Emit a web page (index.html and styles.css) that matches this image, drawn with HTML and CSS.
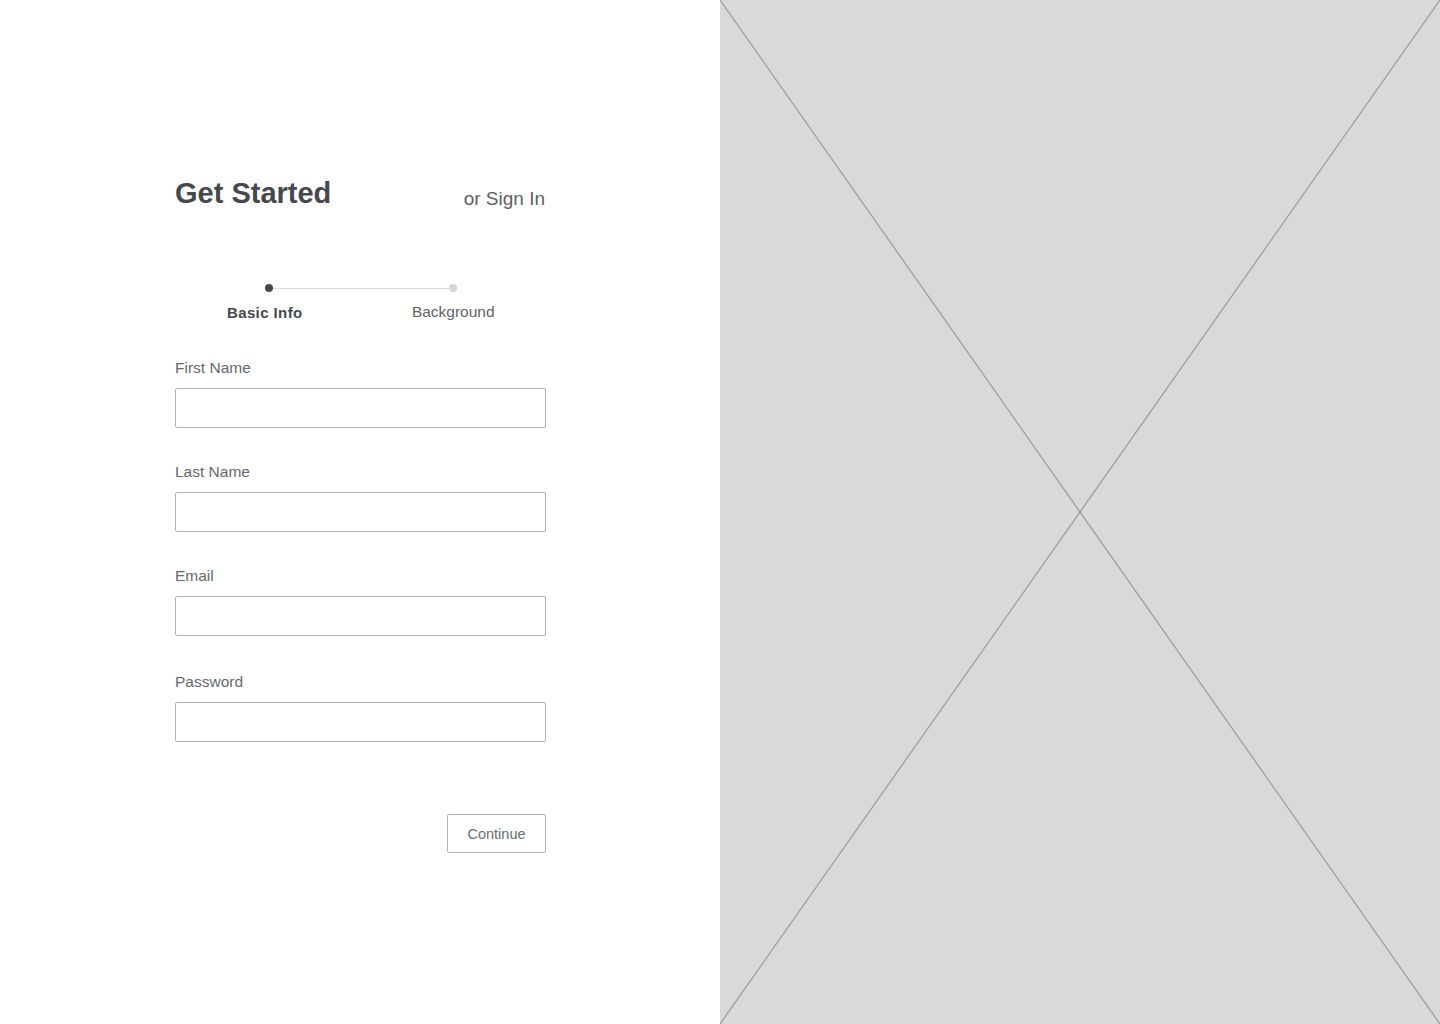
FILE: index.html
```html
<!DOCTYPE html>
<html lang="en">
<head>
<meta charset="utf-8">
<title>Get Started</title>
<link rel="stylesheet" href="styles.css">
</head>
<body>
<div class="page">
  <main class="left">
    <div class="form">
      <header class="head">
        <h1 class="title">Get Started</h1>
        <a class="signin" href="#">or Sign In</a>
      </header>

      <div class="stepper">
        <div class="track">
          <span class="dot dot-active"></span>
          <span class="line"></span>
          <span class="dot"></span>
        </div>
        <div class="steps">
          <span class="step step-active">Basic Info</span>
          <span class="step">Background</span>
        </div>
      </div>

      <div class="fields">
        <label class="field">
          <span class="label">First Name</span>
          <input class="input" type="text">
        </label>
        <label class="field">
          <span class="label">Last Name</span>
          <input class="input" type="text">
        </label>
        <label class="field">
          <span class="label">Email</span>
          <input class="input" type="email">
        </label>
        <label class="field field-pw">
          <span class="label">Password</span>
          <input class="input" type="password">
        </label>
      </div>

      <div class="actions">
        <button class="btn" type="button">Continue</button>
      </div>
    </div>
  </main>
  <aside class="right">
    <svg class="placeholder" viewBox="0 0 720 1024" preserveAspectRatio="none">
      <line x1="0" y1="0" x2="720" y2="1024" />
      <line x1="720" y1="0" x2="0" y2="1024" />
    </svg>
  </aside>
</div>
</body>
</html>
```

FILE: styles.css
```css
* { box-sizing: border-box; }

html, body {
  margin: 0;
  padding: 0;
  background: #ffffff;
  font-family: "Liberation Sans", Arial, Helvetica, sans-serif;
}

.page {
  display: flex;
  width: 1440px;
  height: 1024px;
  overflow: hidden;
}

.left {
  width: 720px;
  flex: 0 0 720px;
  background: #ffffff;
}

.form {
  width: 371px;
  margin-left: 175px;
  padding-top: 176px;
  display: flex;
  flex-direction: column;
}

.head {
  display: flex;
  justify-content: space-between;
  align-items: flex-start;
}

.title {
  margin: 0;
  font-size: 29px;
  line-height: 34px;
  font-weight: 700;
  color: #45494e;
}

.signin {
  margin-top: 11px;
  margin-right: 1px;
  font-size: 19px;
  line-height: 24px;
  color: #5c6166;
  text-decoration: none;
}

.stepper {
  margin-top: 73px;
}

.track {
  display: flex;
  align-items: center;
  height: 8px;
  padding-left: 90px;
  padding-right: 89px;
}

.dot {
  width: 8px;
  height: 8px;
  border-radius: 50%;
  background: #d6d6d6;
  flex: 0 0 8px;
}

.dot-active {
  background: #45494e;
}

.line {
  flex: 1;
  height: 1px;
  background: #dcdcdc;
}

.steps {
  display: grid;
  grid-template-columns: 1fr 1fr;
  margin-top: 11px;
}

.step {
  text-align: center;
  font-size: 15.5px;
  line-height: 18px;
  color: #5f6368;
}

.step:first-child { padding-right: 6px; }

.step-active {
  font-weight: 700;
  font-size: 15px;
  letter-spacing: 0.4px;
  color: #45494e;
  padding-top: 1px;
}

.fields {
  margin-top: 37px;
  display: flex;
  flex-direction: column;
  gap: 35px;
}

.field {
  display: flex;
  flex-direction: column;
}

.field-pw { margin-top: 2px; }

.label {
  font-size: 15.5px;
  line-height: 18px;
  color: #66696d;
  margin-bottom: 11px;
}

.input {
  width: 371px;
  height: 40px;
  margin: 0;
  border: 1px solid #b3b3b3;
  border-radius: 2px;
  background: #ffffff;
  font: inherit;
  padding: 0 10px;
}

.actions {
  margin-top: 72px;
  display: flex;
  justify-content: flex-end;
}

.btn {
  width: 99px;
  height: 39px;
  border: 1px solid #b3b3b3;
  border-radius: 2px;
  background: #ffffff;
  color: #6a6e72;
  font-family: inherit;
  font-size: 14.5px;
  padding: 0;
}

.right {
  flex: 1;
  background: #d9d9d9;
  position: relative;
}

.placeholder {
  display: block;
  width: 100%;
  height: 100%;
}

.placeholder line {
  stroke: #9a9a9a;
  stroke-width: 1.2;
  vector-effect: non-scaling-stroke;
}
```
